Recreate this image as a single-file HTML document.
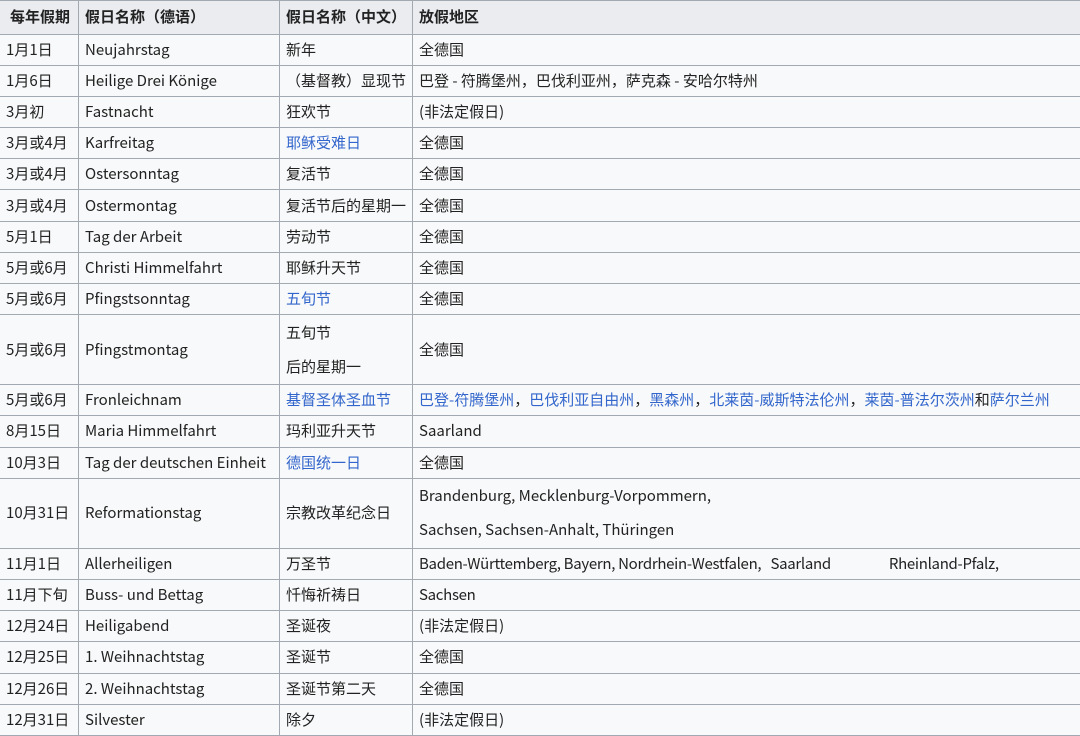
<!DOCTYPE html>
<html><head><meta charset="utf-8"><style>
body{margin:0;width:1080px;height:734px;overflow:hidden;background:#fff;font-family:"Noto Sans CJK SC","Liberation Sans",sans-serif;font-size:15px;color:#222}
table{border-collapse:collapse;table-layout:fixed;width:1100px;background:#f8f9fa;position:absolute;left:-1px;top:0}
td,th{border:1.5px solid #a2a9b1;padding:0 6px;white-space:nowrap;vertical-align:middle;text-align:left;overflow:visible;line-height:20px}
th{background:#eaecf0;font-weight:bold;height:32.5px}
td{height:30.2px}
a{color:#3366cc;text-decoration:none}
.n{letter-spacing:-0.3px}
.t{line-height:34px}
</style></head><body>
<table>
<colgroup><col style="width:79px"><col style="width:201px"><col style="width:133px"><col></colgroup>
<tr><th style="padding-left:10px">每年假期</th><th>假日名称（德语）</th><th>假日名称（中文）</th><th>放假地区</th></tr>
<tr><td>1月1日</td><td>Neujahrstag</td><td>新年</td><td>全德国</td></tr>
<tr><td>1月6日</td><td>Heilige Drei Könige</td><td>（基督教）显现节</td><td>巴登 - 符腾堡州，巴伐利亚州，萨克森 - 安哈尔特州</td></tr>
<tr><td>3月初</td><td>Fastnacht</td><td>狂欢节</td><td>(非法定假日)</td></tr>
<tr><td>3月或4月</td><td>Karfreitag</td><td><a>耶稣受难日</a></td><td>全德国</td></tr>
<tr><td>3月或4月</td><td>Ostersonntag</td><td>复活节</td><td>全德国</td></tr>
<tr><td>3月或4月</td><td>Ostermontag</td><td>复活节后的星期一</td><td>全德国</td></tr>
<tr><td>5月1日</td><td>Tag der Arbeit</td><td>劳动节</td><td>全德国</td></tr>
<tr><td>5月或6月</td><td>Christi Himmelfahrt</td><td>耶稣升天节</td><td>全德国</td></tr>
<tr><td>5月或6月</td><td>Pfingstsonntag</td><td><a>五旬节</a></td><td>全德国</td></tr>
<tr><td style="height:69px">5月或6月</td><td>Pfingstmontag</td><td class="t">五旬节<br>后的星期一</td><td>全德国</td></tr>
<tr><td>5月或6月</td><td>Fronleichnam</td><td><a>基督圣体圣血节</a></td><td><a>巴登-符腾堡州</a>，<a>巴伐利亚自由州</a>，<a>黑森州</a>，<a>北莱茵-威斯特法伦州</a>，<a>莱茵-普法尔茨州</a>和<a>萨尔兰州</a></td></tr>
<tr><td>8月15日</td><td>Maria Himmelfahrt</td><td>玛利亚升天节</td><td>Saarland</td></tr>
<tr><td>10月3日</td><td>Tag der deutschen Einheit</td><td><a>德国统一日</a></td><td>全德国</td></tr>
<tr><td style="height:69px">10月31日</td><td>Reformationstag</td><td>宗教改革纪念日</td><td class="t">Brandenburg, Mecklenburg-Vorpommern,<br>Sachsen, Sachsen-Anhalt, Thüringen</td></tr>
<tr><td>11月1日</td><td>Allerheiligen</td><td>万圣节</td><td class="n">Baden-Württemberg, Bayern, Nordrhein-Westfalen,&nbsp;&nbsp; Saarland<span style="display:inline-block;width:58px"></span>Rheinland-Pfalz,</td></tr>
<tr><td>11月下旬</td><td>Buss- und Bettag</td><td>忏悔祈祷日</td><td class="n">Sachsen</td></tr>
<tr><td>12月24日</td><td>Heiligabend</td><td>圣诞夜</td><td>(非法定假日)</td></tr>
<tr><td>12月25日</td><td>1. Weihnachtstag</td><td>圣诞节</td><td>全德国</td></tr>
<tr><td>12月26日</td><td>2. Weihnachtstag</td><td>圣诞节第二天</td><td>全德国</td></tr>
<tr><td>12月31日</td><td>Silvester</td><td>除夕</td><td>(非法定假日)</td></tr>
</table>
</body></html>
